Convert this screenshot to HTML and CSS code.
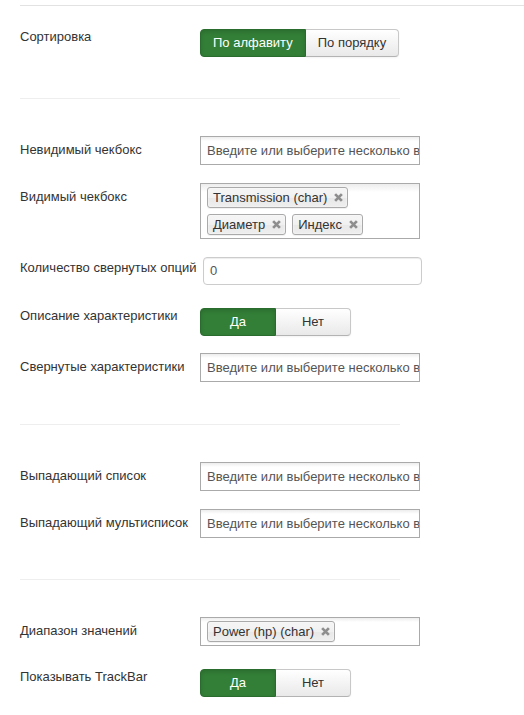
FILE: index.html
```html
<!DOCTYPE html>
<html lang="ru">
<head>
<meta charset="utf-8">
<title>Form</title>
<link rel="stylesheet" href="styles.css">
</head>
<body>
<div class="page">
  <div class="rule rule-top"></div>

  <div class="row row-sort">
    <div class="lbl lbl-btn">Сортировка</div>
    <div class="btn-group">
      <span class="btn btn-on">По алфавиту</span>
      <span class="btn btn-off">По порядку</span>
    </div>
  </div>

  <div class="rule rule-2"></div>

  <div class="row row-first">
    <div class="lbl lbl-chosen">Невидимый чекбокс</div>
    <div class="chosen"><span class="ph">Введите или выберите несколько вариантов</span></div>
  </div>

  <div class="row row-std">
    <div class="lbl lbl-chosen">Видимый чекбокс</div>
    <div class="chosen chosen-tags">
      <span class="tag">Transmission (char)<svg class="x" viewBox="0 0 8 8"><path d="M1 1L7 7M7 1L1 7"/></svg></span>
      <span class="tag">Диаметр<svg class="x" viewBox="0 0 8 8"><path d="M1 1L7 7M7 1L1 7"/></svg></span>
      <span class="tag">Индекс<svg class="x" viewBox="0 0 8 8"><path d="M1 1L7 7M7 1L1 7"/></svg></span>
    </div>
  </div>

  <div class="row row-std">
    <div class="lbl lbl-num">Количество свернутых опций</div>
    <div class="num">0</div>
  </div>

  <div class="row row-btn">
    <div class="lbl lbl-btn">Описание характеристики</div>
    <div class="btn-group">
      <span class="btn btn-on btn-yes">Да</span>
      <span class="btn btn-off btn-no">Нет</span>
    </div>
  </div>

  <div class="row row-after-btn">
    <div class="lbl lbl-chosen">Свернутые характеристики</div>
    <div class="chosen"><span class="ph">Введите или выберите несколько вариантов</span></div>
  </div>

  <div class="rule rule-3"></div>

  <div class="row row-first">
    <div class="lbl lbl-chosen">Выпадающий список</div>
    <div class="chosen"><span class="ph">Введите или выберите несколько вариантов</span></div>
  </div>

  <div class="row row-std">
    <div class="lbl lbl-chosen">Выпадающий мультисписок</div>
    <div class="chosen"><span class="ph">Введите или выберите несколько вариантов</span></div>
  </div>

  <div class="rule rule-4"></div>

  <div class="row row-first">
    <div class="lbl lbl-chosen">Диапазон значений</div>
    <div class="chosen chosen-tags">
      <span class="tag">Power (hp) (char)<svg class="x" viewBox="0 0 8 8"><path d="M1 1L7 7M7 1L1 7"/></svg></span>
    </div>
  </div>

  <div class="row row-btn">
    <div class="lbl lbl-btn">Показывать TrackBar</div>
    <div class="btn-group">
      <span class="btn btn-on btn-yes">Да</span>
      <span class="btn btn-off btn-no">Нет</span>
    </div>
  </div>
</div>
</body>
</html>
```

FILE: styles.css
```css
html, body {
  margin: 0;
  padding: 0;
  background: #fff;
}

body {
  font-family: "Liberation Sans", Arial, sans-serif;
  font-size: 13px;
  line-height: 18px;
  color: #333;
}

.page {
  padding-top: 5px;
  padding-left: 20px;
  overflow: hidden;
}

.rule {
  height: 0;
  border-top: 1px solid #eeeeee;
  width: 380px;
}

.rule-top {
  width: 520px;
  border-top-color: #e2e2e2;
}

.rule-2 { margin-top: 41px; }
.rule-3 { margin-top: 42px; }
.rule-4 { margin-top: 41px; }

.row {
  display: flex;
  align-items: flex-start;
}

.row-sort { margin-top: 23px; }
.row-first { margin-top: 37px; }
.row-std { margin-top: 18px; }
.row-btn { margin-top: 23px; }
.row-after-btn { margin-top: 17px; }

.lbl {
  width: 180px;
  flex: none;
  white-space: nowrap;
  color: #333;
}

.lbl-btn { padding-top: 0; line-height: 16px; }
.lbl-chosen { padding-top: 5px; }
.lbl-num { padding-top: 2px; }

/* button groups */
.btn-group {
  display: flex;
}

.btn {
  display: block;
  box-sizing: border-box;
  height: 28px;
  padding: 4px 12px;
  line-height: 18px;
  font-size: 13px;
  text-align: center;
  border: 1px solid #c5c5c5;
  white-space: nowrap;
}

.btn-on {
  background: #337f37;
  border-color: #2a6c2e;
  color: #fff;
  border-radius: 4px 0 0 4px;
  box-shadow: inset 0 2px 4px rgba(0, 0, 0, 0.15);
}

.btn-off {
  background: linear-gradient(#ffffff, #e9e9e9);
  border-color: #c8c8c8 #c8c8c8 #b3b3b3;
  border-left: 0;
  color: #333;
  border-radius: 0 4px 4px 0;
  box-shadow: 0 1px 2px rgba(0, 0, 0, 0.05);
}

.btn-yes { width: 76px; }
.btn-no { width: 75px; }

/* chosen-like fields */
.chosen {
  box-sizing: border-box;
  width: 220px;
  height: 29px;
  border: 1px solid #aaa;
  background: linear-gradient(#eee 1%, #fff 15%);
  padding: 0 0 0 6px;
  overflow: hidden;
  white-space: nowrap;
}

.ph {
  display: block;
  line-height: 27px;
  color: #555;
}

.chosen-tags {
  height: auto;
  min-height: 29px;
  padding: 0 5px 0 6px;
  display: flex;
  flex-wrap: wrap;
}

.tag {
  position: relative;
  display: inline-block;
  box-sizing: border-box;
  height: 21px;
  margin: 3px 6px 3px 0;
  padding: 3px 20px 3px 5px;
  line-height: 13px;
  border: 1px solid #aaa;
  border-radius: 3px;
  background: linear-gradient(#f4f4f4 20%, #f0f0f0 50%, #e8e8e8 52%, #eee 100%);
  box-shadow: inset 0 0 2px #fff, 0 1px 0 rgba(0, 0, 0, 0.05);
  color: #333;
}

.x {
  position: absolute;
  right: 4px;
  top: 5px;
  width: 9px;
  height: 9px;
  fill: none;
  stroke: #8e8e8e;
  stroke-width: 2.4;
}

/* number input */
.num {
  box-sizing: border-box;
  width: 219px;
  height: 28px;
  margin-left: 3px;
  border: 1px solid #ccc;
  border-radius: 4px;
  padding: 4px 6px;
  line-height: 18px;
  color: #555;
  box-shadow: inset 0 1px 1px rgba(0, 0, 0, 0.075);
}
```
